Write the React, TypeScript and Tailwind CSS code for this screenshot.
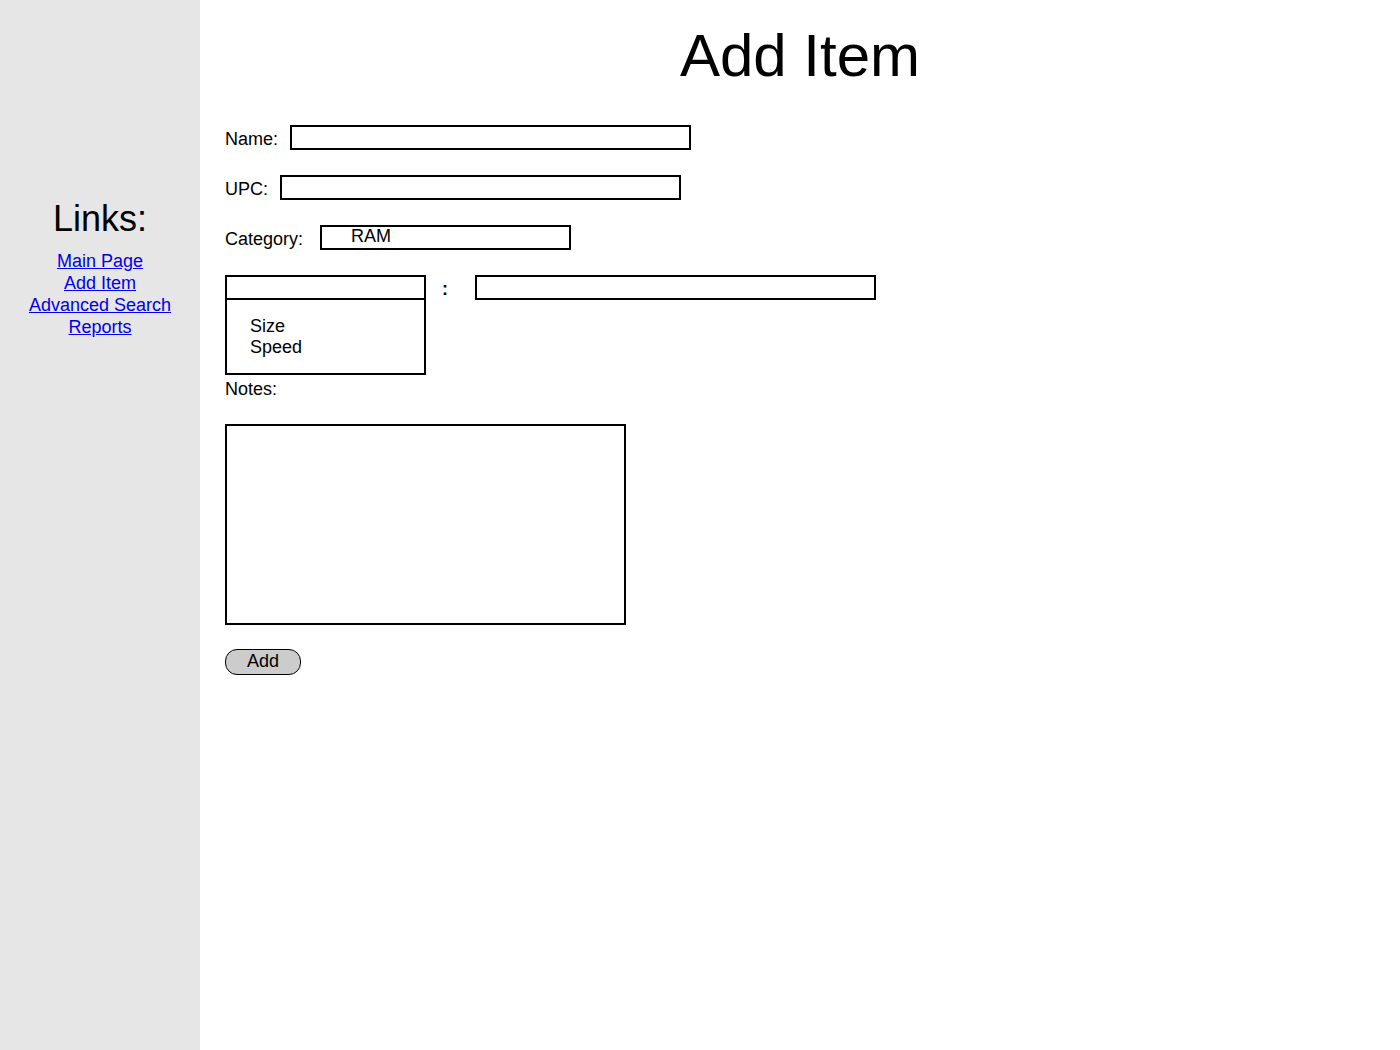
const links = ["Main Page", "Add Item", "Advanced Search", "Reports"];

export default function App() {
  return (
    <div className="flex min-h-[1050px] w-[1400px] bg-white font-['Liberation_Sans',Arial,sans-serif] text-black">
      {/* Sidebar */}
      <aside className="w-[200px] shrink-0 bg-[#e6e6e6] pt-[198px] text-center">
        <h2 className="text-[36px] leading-[41px]">Links:</h2>
        <nav className="mt-[11px] flex flex-col items-center">
          {links.map((l) => (
            <a key={l} href="#" className="text-[18px] leading-[22px] text-[#0000ee] underline">
              {l}
            </a>
          ))}
        </nav>
      </aside>

      {/* Main */}
      <main className="flex-1 pl-[25px] pt-[21px]">
        <h1 className="pr-[25px] text-center text-[60px] leading-[69px]">Add Item</h1>

        <div className="mt-[35px] flex flex-col text-[18px] leading-[21px]">
          <div className="flex h-[25px] items-center">
            <span className="mt-[3px]">Name:</span>
            <div className="ml-[12px] h-[25px] w-[401px] border-2 border-black" />
          </div>

          <div className="mt-[25px] flex h-[25px] items-center">
            <span className="mt-[3px]">UPC:</span>
            <div className="ml-[12px] h-[25px] w-[401px] border-2 border-black" />
          </div>

          <div className="mt-[25px] flex h-[25px] items-center">
            <span className="mt-[3px]">Category:</span>
            <div className="ml-[17px] flex h-[25px] w-[251px] items-start border-2 border-black pl-[29px] leading-[19px]">
              RAM
            </div>
          </div>

          <div className="mt-[25px] flex items-start">
            <div className="flex w-[201px] flex-col">
              <div className="h-[25px] border-2 border-black" />
              <div className="h-[75px] border-2 border-t-0 border-black pl-[23px] pt-[16px]">
                <div>Size</div>
                <div>Speed</div>
              </div>
            </div>
            <div className="flex h-[25px] w-[49px] items-center pl-[16px] pt-[3px] font-bold">:</div>
            <div className="h-[25px] w-[401px] border-2 border-black" />
          </div>

          <div className="mt-[4px]">Notes:</div>

          <div className="mt-[24px] h-[201px] w-[401px] border-2 border-black" />

          <div className="mt-[24px]">
            <button
              type="button"
              className="flex h-[26px] w-[76px] items-start justify-center rounded-[12px] border border-black bg-[#cccccc] pt-[1px] text-[18px] leading-[20px]"
            >
              Add
            </button>
          </div>
        </div>
      </main>
    </div>
  );
}
